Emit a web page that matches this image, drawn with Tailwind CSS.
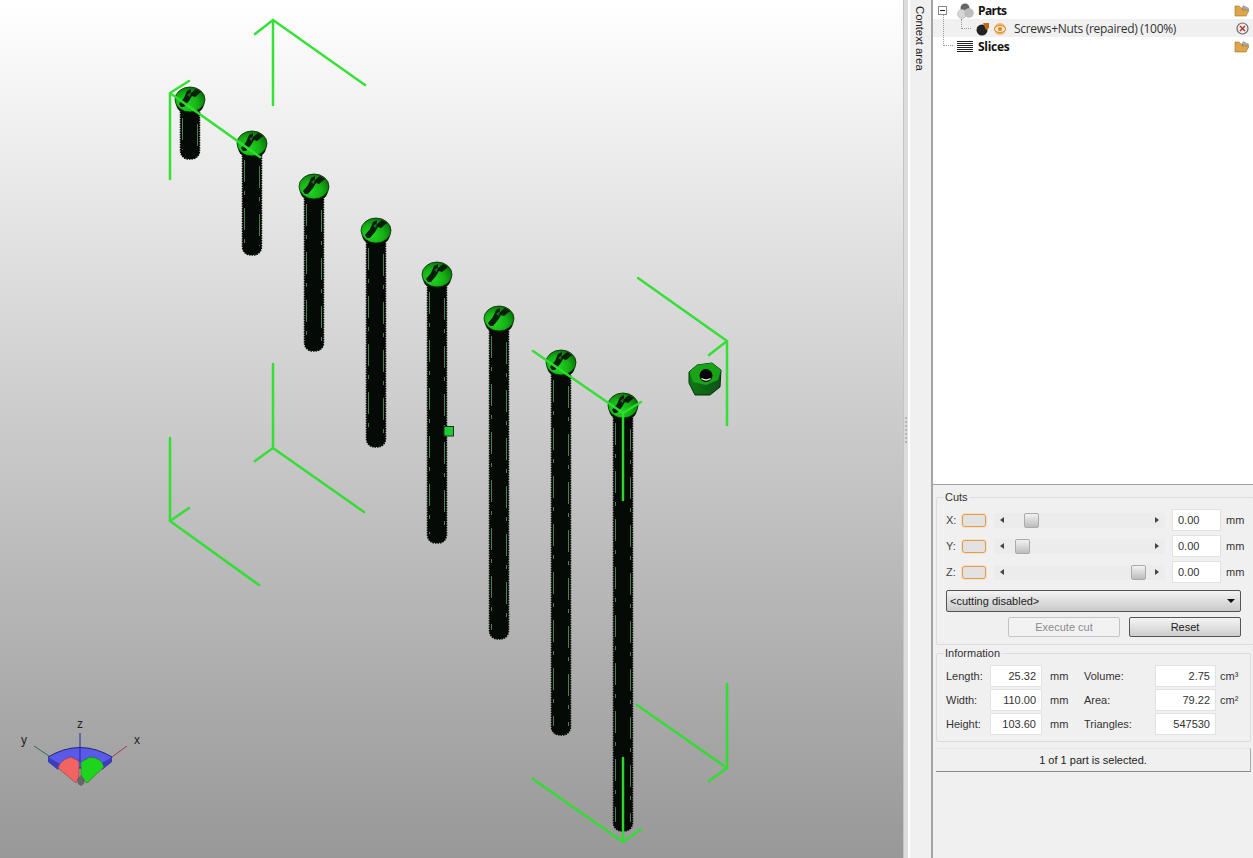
<!DOCTYPE html>
<html>
<head>
<meta charset="utf-8">
<script src="https://cdn.jsdelivr.net/npm/@tailwindcss/browser@4"></script>
</head>
<body class="m-0 overflow-hidden">
<div class="flex w-[1253px] h-[858px] overflow-hidden bg-[#f0f0f0] text-[11px] text-[#222] font-['Liberation_Sans',Arial,sans-serif]">
  <!-- 3D viewport -->
  <div class="w-[903px] h-full shrink-0 bg-gradient-to-b from-white to-[#989898]">
    <svg width="903" height="858" viewBox="0 0 903 858" class="block">
      <defs>
        <radialGradient id="hg" cx="0.35" cy="0.68" r="0.75">
          <stop offset="0" stop-color="#22d822"/>
          <stop offset="0.55" stop-color="#16b016"/>
          <stop offset="0.9" stop-color="#0a7a0a"/>
          <stop offset="1" stop-color="#064f06"/>
        </radialGradient>
        <linearGradient id="nutside" x1="0" y1="0" x2="1" y2="0">
          <stop offset="0" stop-color="#0c7a12"/>
          <stop offset="1" stop-color="#12501a"/>
        </linearGradient>
        <g id="head">
          <path d="M-14 3 Q-14 13 0 14 Q14 13 14 3 Z" fill="#041004"/>
          <ellipse cx="0" cy="-0.500" rx="15" ry="12.500" fill="url(#hg)" stroke="#062b06" stroke-width="0.800"/>
          <path d="M-11 4 L-6 -2 L-3 -9 L1 -11 L1 -7 L6 -11 L11 -8 L5 -3 L2 -4 L-1 1 L-6 7 L-9 7 Z" fill="#0a1c0a"/>
          <path d="M-3 -5 L1 -8 L0 -3 Z" fill="#1d6a1d"/>
        </g>
      </defs>

      <!-- screws -->
      <g fill="#060a06" stroke="#060a06" stroke-width="1.500" stroke-dasharray="1.500 1">
        <path d="M180.500 106 h19 v45 a8 8 0 0 1 -8 8 h-3 a8 8 0 0 1 -8 -8 z"/>
        <path d="M242.500 149 h19 v98 a8 8 0 0 1 -8 8 h-3 a8 8 0 0 1 -8 -8 z"/>
        <path d="M304.500 193 h19 v150 a8 8 0 0 1 -8 8 h-3 a8 8 0 0 1 -8 -8 z"/>
        <path d="M366.500 237 h19 v202 a8 8 0 0 1 -8 8 h-3 a8 8 0 0 1 -8 -8 z"/>
        <path d="M427.500 281 h19 v254 a8 8 0 0 1 -8 8 h-3 a8 8 0 0 1 -8 -8 z"/>
        <path d="M489.500 325 h19 v306 a8 8 0 0 1 -8 8 h-3 a8 8 0 0 1 -8 -8 z"/>
        <path d="M551.500 369 h19 v358 a8 8 0 0 1 -8 8 h-3 a8 8 0 0 1 -8 -8 z"/>
        <path d="M613.500 412 h19 v411 a8 8 0 0 1 -8 8 h-3 a8 8 0 0 1 -8 -8 z"/>
      </g>
      <g stroke="#5fa868" stroke-width="1" stroke-dasharray="22 9 4 13" fill="none" opacity="0.75">
        <path d="M182.500 118 V150 M197.500 124 V150"/>
        <path d="M244.500 160 V246 M259.500 166 V246"/>
        <path d="M306.500 204 V342 M321.500 210 V342"/>
        <path d="M368.500 248 V438 M383.500 254 V438"/>
        <path d="M429.500 292 V534 M444.500 298 V534"/>
        <path d="M491.500 336 V630 M506.500 342 V630"/>
        <path d="M553.500 380 V726 M568.500 386 V726"/>
        <path d="M615.500 423 V822 M630.500 429 V822"/>
      </g>
      <use href="#head" x="190" y="100"/>
      <use href="#head" x="252" y="144"/>
      <use href="#head" x="314" y="187"/>
      <use href="#head" x="376" y="231"/>
      <use href="#head" x="437" y="275"/>
      <use href="#head" x="499" y="319"/>
      <use href="#head" x="561" y="363"/>
      <use href="#head" x="623" y="406"/>

      <!-- nut -->
      <path d="M689 372 L697 365 L712 363 L721 370 L720 387 L710 395 L695 395 L689 383 Z" fill="url(#nutside)" stroke="#063006"/>
      <path d="M689.500 372 L697 365 L712 363 L721 370 L718 380 L706 385 L693 382 Z" fill="#17a417"/>
      <circle cx="706" cy="375.500" r="6.500" fill="#050805"/>
      <path d="M701.500 378.500 Q706 381.500 710.500 378.500" stroke="#e8e8e8" stroke-width="1.500" fill="none"/>

      <!-- bounding box corners -->
      <g stroke="#2ee02e" stroke-width="2.500" fill="none" stroke-linecap="round" stroke-linejoin="round" opacity="0.95">
        <path d="M273 105 V20 L365 85 M273 20 L255 34"/>
        <path d="M170 179 V93 L260 157 M170 93 L189 81"/>
        <path d="M273 364 V448 L364 512 M273 448 L255 461"/>
        <path d="M170 438 V521 L259 585 M170 521 L189 508"/>
        <path d="M727 425 V341 L638 278 M727 341 L709 355"/>
        <path d="M623 500 V413 L533 351 M623 413 L641 402"/>
        <path d="M727 684 V768 L637 705 M727 768 L709 781"/>
        <path d="M623 758 V842 L533 779 M623 842 L641 829"/>
      </g>

      <!-- handle -->
      <rect x="444" y="426.500" width="9.500" height="9.500" fill="#22c83a" stroke="#0b3a10"/>

      <!-- orientation gizmo -->
      <path d="M48 757 Q80 738 112 757 L102 768 H58 Z" fill="#5a5ae8" stroke="#24247a" stroke-width="1"/>
      <path d="M48 757 L48 762 L58 770 L60 764 Z M112 757 L112 762 L102 770 L100 764 Z" fill="#3e3ebc"/>
      <path d="M58 768 Q60 760 71 757 L79 761 L79 778 L76 783 Z" fill="#f26464" stroke="#7a2a2a" stroke-width="0.500"/>
      <path d="M81 762 L90 757 Q102 758 104 767 L87 783 L81 778 Z" fill="#1fd41f" stroke="#0d6a0d" stroke-width="0.500"/>
      <path d="M77 779 L81 775 L85 780 L84 784 L81 786 L78 784 Z" fill="#666"/>
      <path d="M80 733 V762" stroke="#2222b0" stroke-width="1"/>
      <path d="M34 746 L49 756" stroke="#3a6a4a" stroke-width="1"/>
      <path d="M127 746 L112 757" stroke="#a83a4a" stroke-width="1"/>
      <text x="80" y="728" text-anchor="middle" font-size="12" fill="#222">z</text>
      <text x="24" y="744" text-anchor="middle" font-size="12" fill="#222">y</text>
      <text x="137" y="744" text-anchor="middle" font-size="12" fill="#222">x</text>
    </svg>
  </div>

  <!-- splitter -->
  <div class="relative w-[5px] h-full shrink-0 bg-[#dcdcdc] flex items-center justify-center border-l border-[#c4c4c4]">
    <div class="flex flex-col gap-[2px] mb-[-2px]">
      <span class="w-[2px] h-[2px] bg-[#b5b5b5]"></span><span class="w-[2px] h-[2px] bg-[#b5b5b5]"></span><span class="w-[2px] h-[2px] bg-[#b5b5b5]"></span><span class="w-[2px] h-[2px] bg-[#b5b5b5]"></span><span class="w-[2px] h-[2px] bg-[#b5b5b5]"></span><span class="w-[2px] h-[2px] bg-[#b5b5b5]"></span><span class="w-[2px] h-[2px] bg-[#b5b5b5]"></span>
    </div>
  </div>

  <!-- context tab -->
  <div class="w-[25px] h-full shrink-0 bg-[#f0f0f0] border-l-2 border-r-2 border-l-white border-r-[#a4a4a4] pt-[6px] flex justify-center">
    <span class="[writing-mode:vertical-rl] text-[11.3px] leading-none text-[#222] h-fit ml-[-2px]">Context area</span>
  </div>

  <!-- right column -->
  <div class="flex-1 h-full flex flex-col min-w-0">
    <!-- tree -->
    <div class="relative h-[485px] shrink-0 bg-white border-b border-[#a0a0a0] pt-[1px] text-[12px] font-['Open_Sans','Liberation_Sans',sans-serif]">
      <div class="relative h-[18px] flex items-center pt-[1px] pl-[24px] pr-[3px]">
        <span class="absolute left-[5px] top-[5px] w-[9px] h-[9px] bg-white border border-[#888] flex items-center justify-center z-10"><span class="w-[5px] h-[1px] bg-[#222]"></span></span>
        <svg width="18" height="16" viewBox="0 0 18 16">
          <circle cx="8" cy="5" r="4.500" fill="#666"/>
          <circle cx="5" cy="11" r="4.500" fill="#d6d6d6" stroke="#aaa" stroke-width="0.500"/>
          <circle cx="12" cy="10" r="4.800" fill="#bdbdbd"/>
        </svg>
        <span class="ml-[3px] font-bold text-[#111] tracking-[-0.6px]">Parts</span>
        <svg width="16" height="13" viewBox="0 0 16 13" class="ml-auto">
          <path d="M9 1 L15 4 L14 9 L7 7 Z" fill="#a8a8a8"/>
          <path d="M1 2 h4 l2 2 h2 l-1 2 h7 l-3 6 H1 Z" fill="#dfa54c" stroke="#a97020" stroke-width="0.600"/>
        </svg>
      </div>

      <div class="relative h-[18px] flex items-center pt-[1px] pl-[43px] pr-[3px] bg-[#f0f0f0]">
        <svg width="14" height="14" viewBox="0 0 14 14">
          <circle cx="6" cy="8" r="5.500" fill="#222"/>
          <path d="M7 1 h6 v5 l-3 2 z" fill="#c46a12"/>
        </svg>
        <svg width="14" height="14" viewBox="0 0 14 14" class="ml-[3px]">
          <circle cx="7" cy="7" r="6" fill="#f2b870"/>
          <ellipse cx="7" cy="7" rx="5.500" ry="3.500" fill="#ffe6c4" stroke="#d9862b"/>
          <circle cx="7" cy="7" r="2" fill="#d9862b"/>
        </svg>
        <span class="ml-[7px] text-[#333] whitespace-nowrap tracking-[-0.3px]">Screws+Nuts (repaired) (100%)</span>
        <svg width="13" height="13" viewBox="0 0 13 13" class="ml-auto mr-[1px]">
          <circle cx="6.500" cy="6.500" r="5.500" fill="#f4ecec" stroke="#666" stroke-width="1.200"/>
          <path d="M4 4 L9 9 M9 4 L4 9" stroke="#b23a2a" stroke-width="1.500"/>
        </svg>
      </div>

      <div class="relative h-[18px] flex items-center pt-[1px] pl-[24px] pr-[3px]">
        <div class="w-[16px] flex flex-col gap-[1px]">
          <span class="h-[1px] bg-[#222]"></span><span class="h-[1px] bg-[#222]"></span><span class="h-[1px] bg-[#222]"></span><span class="h-[1px] bg-[#222]"></span><span class="h-[1px] bg-[#222]"></span><span class="h-[1px] bg-[#222]"></span>
        </div>
        <span class="ml-[5px] font-bold text-[#111] tracking-[-0.3px]">Slices</span>
        <svg width="16" height="13" viewBox="0 0 16 13" class="ml-auto">
          <path d="M9 1 L15 4 L14 9 L7 7 Z" fill="#a8a8a8"/>
          <path d="M1 2 h4 l2 2 h2 l-1 2 h7 l-3 6 H1 Z" fill="#dfa54c" stroke="#a97020" stroke-width="0.600"/>
        </svg>
      </div>

      <!-- tree connector lines, over the row backgrounds -->
      <div class="absolute left-[10px] top-[14px] h-[32px] w-[10px] border-l border-b border-dotted border-[#999]"></div>
      <div class="absolute left-[28px] top-[19px] h-[10px] w-[10px] border-l border-b border-dotted border-[#999]"></div>
    </div>

    <!-- controls -->
    <div class="flex-1 pl-[3px] pr-[2px] pt-[6px] flex flex-col">
      <fieldset class="h-[154px] border border-[#dcdcdc] rounded-[2px] px-[9px]">
        <legend class="ml-[-2px] px-[1px] leading-[13px] text-[#333]">Cuts</legend>
        <div class="flex flex-col gap-[4px] pt-[5px]">
          <div class="flex items-center h-[22px]">
            <span class="w-[16px] text-[#444]">X:</span>
            <span class="w-[24px] h-[13px] rounded-[3px] border border-[#e59a4e] ring-1 ring-[#f7dfc4] bg-[#e2e2e2]"></span>
            <div class="ml-[8px] w-[171px] h-[15px] bg-[#ececec] flex items-center relative">
              <span class="absolute left-[6px] w-0 h-0 border-y-[3px] border-y-transparent border-r-[4px] border-r-[#444]"></span>
              <span class="absolute right-[6px] w-0 h-0 border-y-[3px] border-y-transparent border-l-[4px] border-l-[#444]"></span>
              <span class="absolute left-[30px] w-[15px] h-[15px] rounded-[2px] border border-[#aaa] bg-gradient-to-b from-[#f2f2f2] to-[#bcbcbc]"></span>
            </div>
            <span class="ml-[7px] w-[49px] h-[22px] bg-white border border-[#e2e2e2] flex items-center pl-[5px] text-[#333]">0.00</span>
            <span class="ml-[5px] text-[#333]">mm</span>
          </div>
          <div class="flex items-center h-[22px]">
            <span class="w-[16px] text-[#444]">Y:</span>
            <span class="w-[24px] h-[13px] rounded-[3px] border border-[#e59a4e] ring-1 ring-[#f7dfc4] bg-[#e2e2e2]"></span>
            <div class="ml-[8px] w-[171px] h-[15px] bg-[#ececec] flex items-center relative">
              <span class="absolute left-[6px] w-0 h-0 border-y-[3px] border-y-transparent border-r-[4px] border-r-[#444]"></span>
              <span class="absolute right-[6px] w-0 h-0 border-y-[3px] border-y-transparent border-l-[4px] border-l-[#444]"></span>
              <span class="absolute left-[21px] w-[15px] h-[15px] rounded-[2px] border border-[#aaa] bg-gradient-to-b from-[#f2f2f2] to-[#bcbcbc]"></span>
            </div>
            <span class="ml-[7px] w-[49px] h-[22px] bg-white border border-[#e2e2e2] flex items-center pl-[5px] text-[#333]">0.00</span>
            <span class="ml-[5px] text-[#333]">mm</span>
          </div>
          <div class="flex items-center h-[22px]">
            <span class="w-[16px] text-[#444]">Z:</span>
            <span class="w-[24px] h-[13px] rounded-[3px] border border-[#e59a4e] ring-1 ring-[#f7dfc4] bg-[#e2e2e2]"></span>
            <div class="ml-[8px] w-[171px] h-[15px] bg-[#ececec] flex items-center relative">
              <span class="absolute left-[6px] w-0 h-0 border-y-[3px] border-y-transparent border-r-[4px] border-r-[#444]"></span>
              <span class="absolute right-[6px] w-0 h-0 border-y-[3px] border-y-transparent border-l-[4px] border-l-[#444]"></span>
              <span class="absolute left-[137px] w-[15px] h-[15px] rounded-[2px] border border-[#aaa] bg-gradient-to-b from-[#f2f2f2] to-[#bcbcbc]"></span>
            </div>
            <span class="ml-[7px] w-[49px] h-[22px] bg-white border border-[#e2e2e2] flex items-center pl-[5px] text-[#333]">0.00</span>
            <span class="ml-[5px] text-[#333]">mm</span>
          </div>
        </div>
        <div class="mt-[7px] h-[22px] w-[295px] rounded-[2px] border border-[#555] bg-gradient-to-b from-[#f4f4f4] to-[#c9c9c9] flex items-center px-[3px] text-[#222]">
          <span>&lt;cutting disabled&gt;</span>
          <span class="ml-auto mr-[2px] w-0 h-0 border-x-[4px] border-x-transparent border-t-[4px] border-t-[#111]"></span>
        </div>
        <div class="mt-[5px] w-[295px] flex justify-end gap-[9px]">
          <span class="w-[112px] h-[20px] rounded-[2px] border border-[#c4c4c4] bg-[#f2f2f2] flex items-center justify-center text-[#8c8c8c]">Execute cut</span>
          <span class="w-[112px] h-[20px] rounded-[2px] border border-[#555] bg-gradient-to-b from-[#f5f5f5] to-[#cdcdcd] flex items-center justify-center text-[#222]">Reset</span>
        </div>
      </fieldset>

      <fieldset class="mt-[2px] h-[95px] border border-[#dcdcdc] rounded-[2px] px-[9px]">
        <legend class="ml-[-2px] px-[1px] leading-[13px] text-[#333]">Information</legend>
        <div class="grid grid-cols-[44px_52px_42px_71px_61px_auto] grid-rows-[22px_22px_22px] gap-y-[2px] items-center mt-[5px] text-[#333]">
          <span>Length:</span><span class="h-[22px] bg-white border border-[#e2e2e2] flex items-center justify-end pr-[5px]">25.32</span><span class="pl-[8px]">mm</span><span>Volume:</span><span class="h-[22px] bg-white border border-[#e2e2e2] flex items-center justify-end pr-[5px]">2.75</span><span class="pl-[4px]">cm³</span>
          <span>Width:</span><span class="h-[22px] bg-white border border-[#e2e2e2] flex items-center justify-end pr-[5px]">110.00</span><span class="pl-[8px]">mm</span><span>Area:</span><span class="h-[22px] bg-white border border-[#e2e2e2] flex items-center justify-end pr-[5px]">79.22</span><span class="pl-[4px]">cm²</span>
          <span>Height:</span><span class="h-[22px] bg-white border border-[#e2e2e2] flex items-center justify-end pr-[5px]">103.60</span><span class="pl-[8px]">mm</span><span>Triangles:</span><span class="h-[22px] bg-white border border-[#e2e2e2] flex items-center justify-end pr-[5px]">547530</span><span></span>
        </div>
      </fieldset>

      <div class="mt-[6px] h-[24px] shrink-0 border-t border-[#e4e4e4] border-r border-r-[#aaa] border-b border-b-[#888] bg-[#f0f0f0] flex items-center justify-center text-[#222]">1 of 1 part is selected.</div>
    </div>
  </div>
</div>
</body>
</html>
